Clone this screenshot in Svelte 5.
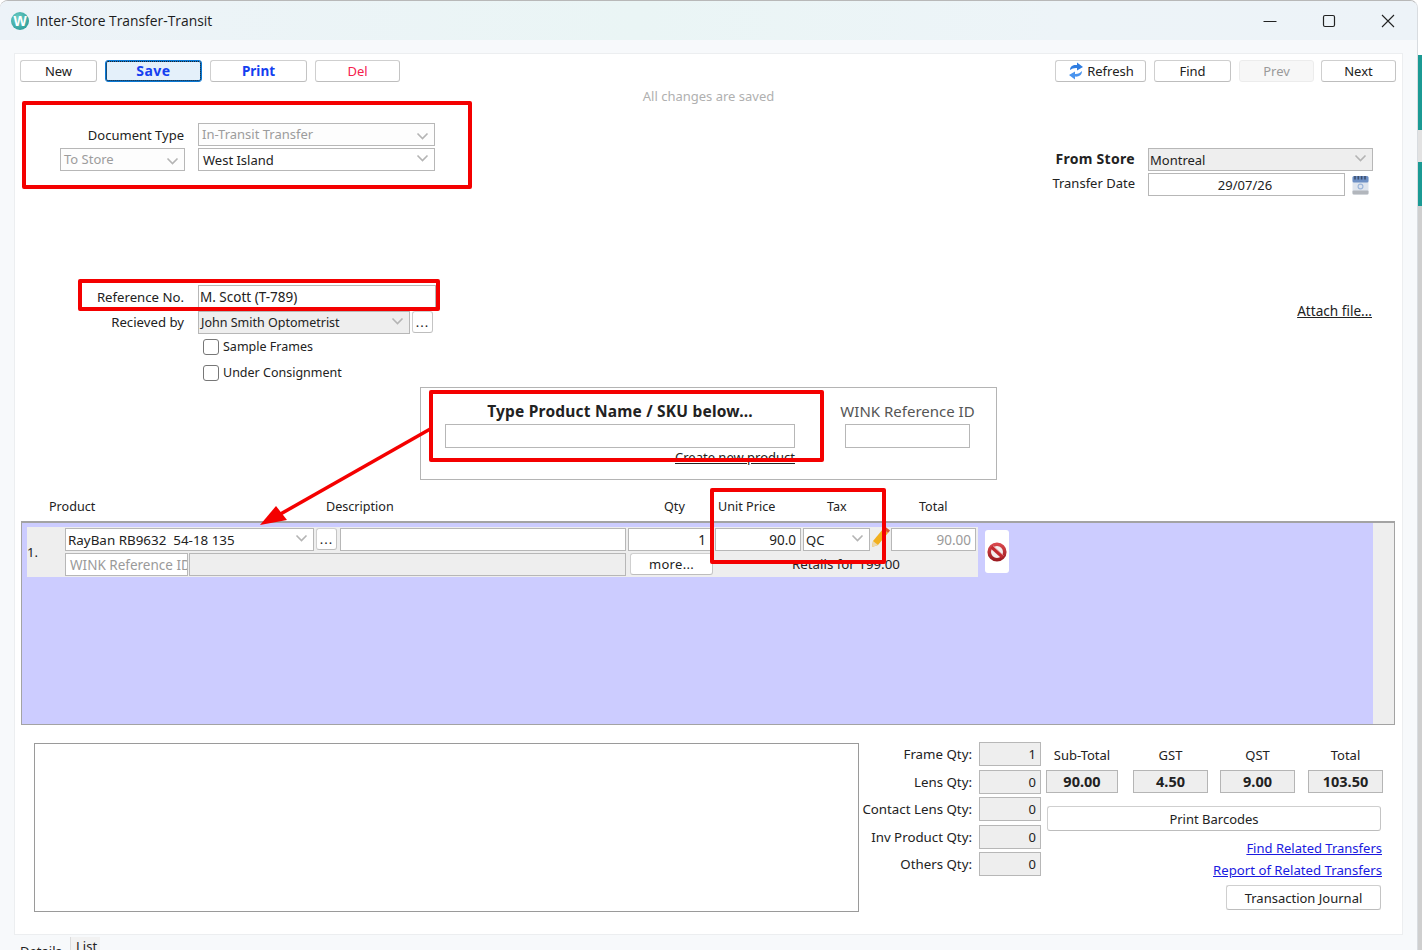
<script>
  let sampleFrames = false;
  let underConsignment = false;
  const qtys = [
    ['Frame Qty:', 1],
    ['Lens Qty:', 0],
    ['Contact Lens Qty:', 0],
    ['Inv Product Qty:', 0],
    ['Others Qty:', 0]
  ];
  const totals = [
    ['Sub-Total', '90.00'],
    ['GST', '4.50'],
    ['QST', '9.00'],
    ['Total', '103.50']
  ];
</script>

{#snippet chevron()}
  <svg class="chev" width="13" height="8" viewBox="0 0 13 8"><path d="M1.5 1.5 6.5 6.5 11.5 1.5" fill="none" stroke="#b4b4b4" stroke-width="1.6" /></svg>
{/snippet}

<div class="screen">
  <div class="window">
    <header class="titlebar">
      <div class="logo">W</div>
      <span class="title">Inter-Store Transfer-Transit</span>
      <div class="winctl">
        <svg width="14" height="14" viewBox="0 0 14 14"><path d="M0.5 7.5H13.5" stroke="#222" stroke-width="1" /></svg>
        <svg width="14" height="14" viewBox="0 0 14 14"><rect x="1.5" y="1.5" width="11" height="11" rx="1.5" fill="none" stroke="#222" stroke-width="1.2" /></svg>
        <svg width="14" height="14" viewBox="0 0 14 14"><path d="M1 1 13 13M13 1 1 13" stroke="#222" stroke-width="1.1" /></svg>
      </div>
    </header>

    <main class="panel">
      <div class="toolbar">
        <div class="btns">
          <button class="btn b77">New</button>
          <button class="btn b97 save">Save</button>
          <button class="btn b97 print">Print</button>
          <button class="btn b85 del">Del</button>
        </div>
        <div class="btns">
          <button class="btn b91 refresh">
            <svg width="18" height="20" viewBox="0 0 18 20">
              <path d="M3 9C3 5.500 6 3.500 10 4V1.500L16 6 10 9.500V7C7 6.800 5 7.500 3 9Z" fill="#2f7de1" />
              <path d="M15 10C15 14 12 16 8 15.600V18.500L2 14 8 10.500V13C11 13.200 13 12 15 10Z" fill="#4a94ee" />
            </svg>
            Refresh
          </button>
          <button class="btn b77">Find</button>
          <button class="btn b75 off">Prev</button>
          <button class="btn b75 next">Next</button>
        </div>
      </div>

      <div class="status">All changes are saved</div>

      <section class="head">
        <div class="doc">
          <div class="lbl pad1">Document Type</div>
          <div class="sel dis">In-Transit Transfer{@render chevron()}</div>
          <div class="sel dis">To Store{@render chevron()}</div>
          <div class="sel">West Island{@render chevron()}</div>
        </div>
        <div class="store">
          <div class="lbl strong">From Store</div>
          <div class="sel grey wide">Montreal{@render chevron()}</div>
          <div class="lbl">Transfer Date</div>
          <div class="datebox">
            <div class="inp center">29/07/26</div>
            <svg width="17" height="20" viewBox="0 0 17 20">
              <rect x="0.500" y="1" width="16" height="18.500" rx="2" fill="#dfe5ee" />
              <rect x="0.500" y="1" width="16" height="6.500" rx="1.500" fill="#6d8fc4" />
              <path d="M3 1V4.500M6.300 1V4.500M9.600 1V4.500M13 1V4.500" stroke="#3d4f6e" stroke-width="1.600" />
              <rect x="0.500" y="15.500" width="16" height="4" rx="1" fill="#b2b6bc" />
              <circle cx="8.500" cy="11.500" r="2.400" fill="none" stroke="#9db6da" stroke-width="1.200" />
            </svg>
          </div>
        </div>
      </section>

      <section class="refs">
        <div class="refgrid">
          <div class="lbl">Reference No.</div>
          <div class="inp dark">M. Scott (T-789)</div>
          <div class="lbl recvlbl">Recieved by</div>
          <div class="recv">
            <div class="sel grey">John Smith Optometrist{@render chevron()}</div>
            <button class="btn dots">...</button>
          </div>
          <label class="chk"><input type="checkbox" bind:checked={sampleFrames} />Sample Frames</label>
          <label class="chk"><input type="checkbox" bind:checked={underConsignment} />Under Consignment</label>
        </div>
        <a class="attach" href="#attach">Attach file...</a>
      </section>

      <section class="finder">
        <div class="fcol main">
          <div class="flabel bold">Type Product Name / SKU below...</div>
          <div class="inp"></div>
          <a class="create" href="#create">Create new product</a>
        </div>
        <div class="fcol side">
          <div class="flabel big">WINK Reference ID</div>
          <div class="inp"></div>
        </div>
      </section>

      <div class="cols">
        <span>Product</span><span>Description</span><span>Qty</span><span>Unit Price</span><span>Tax</span><span>Total</span>
      </div>

      <section class="grid">
        <div class="gridbody">
          <div class="row">
            <div class="num">1.</div>
            <div class="lines">
              <div class="line">
                <div class="sel c-product">RayBan RB9632&nbsp; 54-18 135{@render chevron()}</div>
                <div class="dotcell"><button class="btn dots">...</button></div>
                <div class="inp c-desc"></div>
                <div class="inp c-qty right">1</div>
                <div class="inp c-price right">90.0</div>
                <div class="sel c-tax">QC{@render chevron()}</div>
                <div class="pencil">
                  <svg width="20" height="24" viewBox="0 0 20 24">
                    <path d="M3 16 13 4l5 4-10 12-6 2Z" fill="#f2b01e" />
                    <path d="M13 4l2-2.500 5 4-2 2.500Z" fill="#d9572b" />
                    <path d="M2 22l1-6 5 4Z" fill="#ecd9b0" />
                  </svg>
                </div>
                <div class="inp c-total right muted">90.00</div>
              </div>
              <div class="line">
                <div class="inp c-wink muted">WINK Reference ID</div>
                <div class="inp c-note grey"></div>
                <button class="btn more">more...</button>
                <div class="retails">Retails for 199.00</div>
              </div>
            </div>
          </div>
          <button class="rowdel" aria-label="Delete row">
            <svg width="22" height="22" viewBox="0 0 22 22">
              <defs>
                <linearGradient id="ring" x1="0" y1="0" x2="0" y2="1">
                  <stop offset="0" stop-color="#d8474c" />
                  <stop offset="1" stop-color="#9c1c22" />
                </linearGradient>
              </defs>
              <circle cx="11" cy="11" r="7.800" fill="#f4eeee" stroke="url(#ring)" stroke-width="3.600" />
              <path d="M5.500 6 16.500 16" stroke="#c22a30" stroke-width="3.400" />
              <path d="M7 4.800 17.500 14.500" stroke="#e9a0a0" stroke-width="0.800" />
            </svg>
          </button>
        </div>
        <div class="scroll"></div>
      </section>

      <section class="bottom">
        <div class="notes"></div>
        <div class="qtys">
          {#each qtys as [name, value]}
            <div class="lbl">{name}</div>
            <div class="inp grey right">{value}</div>
          {/each}
        </div>
        <div class="summary">
          <div class="totals">
            {#each totals as [name, value]}
              <div class="tot">
                <span class="totlabel">{name}</span>
                <span class="totval">{value}</span>
              </div>
            {/each}
          </div>
          <button class="btn barcodes">Print Barcodes</button>
          <a class="link first" href="#find">Find Related Transfers</a>
          <a class="link" href="#report">Report of Related Transfers</a>
          <div class="journal"><button class="btn">Transaction Journal</button></div>
        </div>
      </section>
    </main>

    <nav class="tabs">
      <span class="tab">Details</span>
      <span class="tab list">List</span>
    </nav>

    <!-- reviewer's red markup lying over the form -->
    <div class="mark m1"></div>
    <div class="mark m2"></div>
    <div class="mark m3"></div>
    <div class="mark m4"></div>
    <svg class="arrow" width="200" height="110" viewBox="0 0 200 110">
      <path d="M185 6 30 94" stroke="#f40000" stroke-width="3.500" fill="none" />
      <path d="M13 103 29 84 40 98Z" fill="#f40000" />
    </svg>
  </div>
  <aside class="desktop">
    <i class="pale"></i><i class="teal a"></i><i class="mid"></i><i class="teal b"></i>
  </aside>
</div>

<style>
  :global(body) {
    margin: 0;
    background: #fff;
  }
  .screen {
    display: flex;
    width: 1422px;
    height: 950px;
    overflow: hidden;
    font-family: "Noto Sans", "DejaVu Sans", sans-serif;
    font-size: 13px;
    color: #222;
  }
  .window {
    position: relative;
    width: 1418px;
    height: 950px;
    flex: none;
    box-sizing: border-box;
    background: #f7f9fb;
    border-top: 1px solid #b8b8b8;
    border-right: 1px solid #d8dce0;
    border-radius: 8px 8px 0 0;
    overflow: hidden;
  }
  .desktop {
    flex: 1;
    display: flex;
    flex-direction: column;
    background: #cfcfcf;
  }
  .desktop i { display: block; }
  .pale { height: 55px; background: #fff; }
  .teal.a { height: 75px; background: #1b9a94; }
  .mid { height: 32px; background: #e2e2e2; }
  .teal.b { height: 44px; background: #1b9a94; }

  .titlebar {
    display: flex;
    align-items: center;
    height: 39px;
    padding-left: 11px;
    background: linear-gradient(90deg, #edf3f8 0%, #eaf5f5 45%, #edf4f8 75%, #edf3f8 100%);
  }
  .logo {
    width: 18px;
    height: 18px;
    border-radius: 50%;
    background: radial-gradient(circle at 40% 35%, #6fd0c8, #1c8f8c);
    color: #fff;
    font: 700 14px/18px "Liberation Sans", sans-serif;
    text-align: center;
  }
  .title {
    margin-left: 7px;
    font-family: "Open Sans", sans-serif;
    font-size: 13.850px;
    color: #1c1c1c;
  }
  .winctl {
    display: flex;
    align-items: center;
    gap: 45px;
    margin-left: auto;
    padding-right: 22px;
  }

  .panel {
    box-sizing: border-box;
    margin: 13px 14px 0 14px;
    height: 882px;
    background: #fff;
    border: 1px solid #eceef0;
  }

  .btn {
    box-sizing: border-box;
    height: 22px;
    padding: 0;
    font: inherit;
    color: #222;
    background: #fff;
    border: 1px solid #cfcfcf;
    border-bottom-color: #bdbdbd;
    border-right-color: #c4c4c4;
    border-radius: 3px;
    line-height: 18px;
  }
  .toolbar {
    display: flex;
    justify-content: space-between;
    height: 28px;
    padding: 6px 6px 0 5px;
    box-sizing: border-box;
  }
  .btns {
    display: flex;
    gap: 8px;
  }
  .b77 { width: 77px; }
  .b97 { width: 97px; }
  .b85 { width: 85px; }
  .b91 { width: 91px; }
  .b75 { width: 75px; }
  .next { margin-left: -1px; }
  .save {
    background: #e4f0fa;
    border: 1px solid #0a78d4;
    outline: 1px dotted #222;
    outline-offset: -2px;
    box-shadow: inset 0 0 0 1px #0a78d4;
    color: #1440f0;
    font-size: 14px;
    letter-spacing: 0.500px;
    font-weight: 700;
  }
  .print { color: #1440f0; font-weight: 700; font-size: 13.500px; }
  .del { color: #f5204e; }
  .off { color: #9a9a9a; background: #f7f7f7; border-color: #ececec; }
  .refresh {
    display: flex;
    align-items: center;
    justify-content: center;
    gap: 2px;
  }

  .status {
    height: 28px;
    line-height: 28px;
    text-align: center;
    color: #b0b0b0;
  }

  .sel, .inp {
    box-sizing: border-box;
    height: 23px;
    line-height: 22px;
    color: #222;
    background: #fff;
    border: 1px solid #b7b7b7;
    white-space: nowrap;
    overflow: hidden;
    min-width: 0;
  }
  .inp { font-size: 13.500px; }
  .sel {
    position: relative;
    padding-left: 4px;
  }
  .chev {
    position: absolute;
    right: 5px;
    top: 5px;
  }
  .sel.dis { color: #9c9c9c; background: #fdfdfd; padding-left: 3px; line-height: 20px; }
  .dis .chev { top: 8px; }
  .sel.grey, .inp.grey { background: #eeeeee; }
  .wide { padding-left: 1px; }
  .center { text-align: center; padding-right: 3px; font-size: 13px; }
  .right { text-align: right; padding-right: 4px; }
  .inp.muted { color: #9a9a9a; }
  .lbl { text-align: right; height: 23px; line-height: 25px; white-space: nowrap; }
  .pad1 { padding-right: 1px; }
  .strong { font-weight: 700; font-size: 14px; letter-spacing: 0.300px; line-height: 21px; }

  .head {
    display: flex;
    align-items: flex-start;
    justify-content: space-between;
    margin-top: 13px;
    padding: 0 29px 0 45px;
  }
  .doc {
    display: grid;
    grid-template-columns: 125px 237px;
    column-gap: 13px;
    row-gap: 2px;
  }
  .store {
    display: grid;
    grid-template-columns: 100px 225px;
    column-gap: 13px;
    row-gap: 2px;
    margin-top: 25px;
  }
  .store .lbl:not(.strong) { line-height: 21px; }
  .datebox {
    display: flex;
    align-items: center;
    gap: 7px;
  }
  .datebox .inp { width: 197px; }

  .refs {
    display: flex;
    align-items: flex-start;
    justify-content: space-between;
    margin-top: 89px;
    padding-right: 30px;
  }
  .refgrid {
    display: grid;
    grid-template-columns: 169px 238px;
    column-gap: 14px;
    grid-auto-rows: 23px;
    row-gap: 3px;
  }
  .refgrid .lbl { font-size: 13.200px; }
  .refgrid .recvlbl { line-height: 23px; }
  .inp.dark { padding-left: 1px; }
  .recv {
    display: flex;
    gap: 2px;
    width: 235px;
  }
  .recv .sel { width: 212px; flex: none; padding-left: 2px; font-size: 12.500px; }
  .dots {
    width: 21px;
    height: 22px;
    line-height: 14px;
    letter-spacing: 1px;
  }
  .chk {
    grid-column: 2;
    display: flex;
    align-items: center;
    height: 25px;
    margin-top: -3px;
    font-size: 12.500px;
  }
  .chk input {
    appearance: none;
    box-sizing: border-box;
    width: 16px;
    height: 16px;
    margin: 0 4px 0 5px;
    background: #fff;
    border: 1px solid #777;
    border-radius: 3px;
  }
  .attach {
    margin-top: 16px;
    height: 19px;
    font-size: 13.600px;
    color: #222;
  }

  .finder {
    box-sizing: border-box;
    display: flex;
    gap: 50px;
    width: 577px;
    height: 93px;
    margin: 1px 0 0 405px;
    padding: 12px 0 0 24px;
    border: 1px solid #b4b4b4;
  }
  .fcol { display: flex; flex-direction: column; }
  .fcol.main { width: 350px; }
  .fcol.side { width: 125px; }
  .fcol .inp { height: 24px; }
  .flabel {
    height: 24px;
    line-height: 22px;
    text-align: center;
    white-space: nowrap;
  }
  .bold { font-weight: 700; font-size: 15.500px; letter-spacing: 0.200px; }
  .big { font-size: 15px; color: #555; margin: 0 -20px; }
  .create {
    align-self: flex-end;
    margin-top: 1px;
    line-height: 17px;
    color: #222;
  }

  .cols {
    display: grid;
    grid-template-columns: 277px 338px 54px 109px 92px auto;
    margin-top: 18px;
    padding-left: 34px;
    height: 18px;
    line-height: 18px;
    font-size: 12.600px;
  }

  .grid {
    box-sizing: border-box;
    display: flex;
    width: 1374px;
    height: 204px;
    margin: 5px 0 0 6px;
    background: #ccccff;
    border: 1px solid #a3a3a3;
    border-top-width: 2px;
  }
  .gridbody {
    flex: 1;
    display: flex;
    align-items: flex-start;
    padding: 4px 0 0 5px;
  }
  .scroll {
    width: 21px;
    background: #eeeeee;
  }
  .row {
    display: flex;
    width: 951px;
    height: 50px;
    padding-top: 1px;
    box-sizing: border-box;
    background: #eeeeee;
  }
  .num {
    width: 38px;
    line-height: 48px;
    flex: none;
  }
  .lines {
    display: flex;
    flex-direction: column;
    gap: 2px;
  }
  .line {
    display: flex;
    height: 23px;
  }
  .c-product { width: 249px; padding-left: 2px; font-size: 13.400px; }
  .c-desc { width: 286px; margin-left: 3px; }
  .c-qty { width: 83px; margin-left: 2px; }
  .c-price { width: 86px; margin-left: 4px; }
  .c-tax { width: 67px; margin-left: 2px; padding-left: 2px; }
  .c-total { width: 85px; margin-left: 2px; }
  .c-wink { width: 123px; padding-left: 4px; }
  .c-note { width: 437px; margin-left: 1px; }
  .dotcell {
    width: 23px;
    padding-left: 2px;
    box-sizing: border-box;
  }
  .pencil {
    width: 19px;
    margin-top: -3px;
  }
  .more {
    width: 83px;
    margin-left: 4px;
    letter-spacing: 0.300px;
  }
  .retails {
    margin-left: 79px;
    line-height: 22px;
    font-size: 13.300px;
    white-space: nowrap;
  }
  .rowdel {
    display: flex;
    align-items: center;
    justify-content: center;
    width: 24px;
    height: 43px;
    margin: 3px 0 0 7px;
    padding: 0;
    background: #fff;
    border: none;
    border-radius: 3px;
  }

  .bottom {
    display: flex;
    align-items: flex-start;
    margin-top: 17px;
    padding-left: 19px;
  }
  .notes {
    box-sizing: border-box;
    width: 825px;
    height: 169px;
    margin-top: 1px;
    border: 1px solid #9a9a9a;
  }
  .qtys {
    display: grid;
    grid-template-columns: 113px 62px;
    column-gap: 7px;
    grid-auto-rows: 24px;
    row-gap: 3.500px;
  }
  .qtys .lbl { font-size: 13.300px; }
  .qtys .inp { height: 24px; font-size: 13px; }
  .summary {
    display: flex;
    flex-direction: column;
    width: 337px;
    margin-left: 5px;
  }
  .totals {
    display: grid;
    grid-template-columns: 87px 87px 88px 75px;
  }
  .tot {
    display: flex;
    flex-direction: column;
    width: 75px;
    text-align: center;
  }
  .tot:first-child { width: 72px; }
  .totlabel {
    height: 28px;
    line-height: 27px;
  }
  .totval {
    box-sizing: border-box;
    height: 23px;
    line-height: 20px;
    font-size: 14.500px;
    font-weight: 700;
    background: #eeeeee;
    border: 1px solid #b5b5b5;
  }
  .barcodes {
    width: 334px;
    height: 25px;
    margin: 13px 0 0 1px;
  }
  .link {
    align-self: flex-end;
    margin-right: 1px;
    color: #1a1ae0;
    line-height: 20px;
  }
  .first { margin-top: 7px; }
  .link + .link { margin-top: 2px; font-size: 13.200px; }
  .journal {
    align-self: flex-end;
    margin: 5px 2px 0 0;
    background: #f6f6f6;
  }
  .journal .btn { width: 155px; height: 25px; }

  .tabs {
    display: flex;
    align-items: flex-start;
    padding-left: 20px;
    height: 15px;
    margin-top: 2px;
  }
  .tab {
    margin-top: 5px;
    width: 50px;
  }
  .tab.list {
    box-sizing: border-box;
    width: 30px;
    height: 15px;
    margin-top: 0;
    padding-left: 5px;
    background: #f2f2f2;
    border-left: 1px solid #dcdcdc;
  }

  .mark {
    position: absolute;
    box-sizing: border-box;
    border: 4px solid #f40000;
    border-radius: 2px;
    pointer-events: none;
  }
  .m1 { left: 22px; top: 100px; width: 450px; height: 88px; }
  .m2 { left: 78px; top: 278px; width: 362px; height: 32px; }
  .m3 { left: 429px; top: 389px; width: 395px; height: 72px; }
  .m4 { left: 710px; top: 487px; width: 176px; height: 76px; }
  .arrow {
    position: absolute;
    left: 247px;
    top: 421px;
  }
</style>
